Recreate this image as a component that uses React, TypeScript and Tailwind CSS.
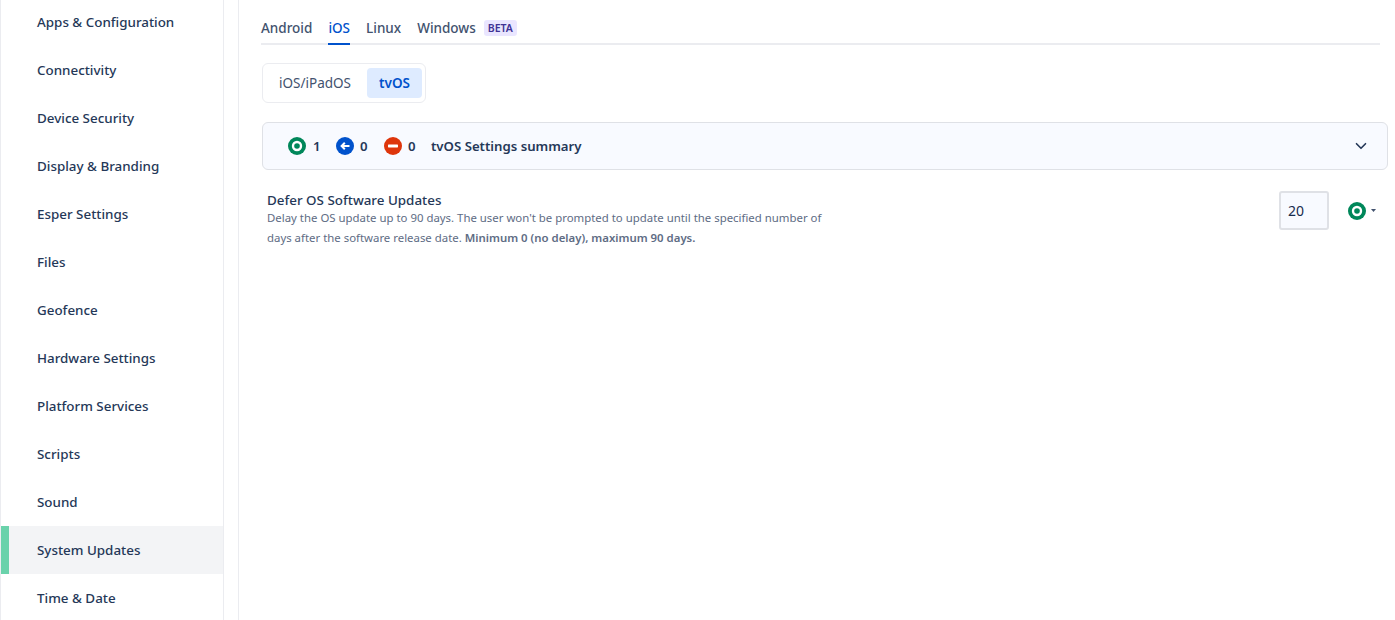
import { ChevronDown } from "lucide-react";

const sections = [
  "Apps & Configuration",
  "Connectivity",
  "Device Security",
  "Display & Branding",
  "Esper Settings",
  "Files",
  "Geofence",
  "Hardware Settings",
  "Platform Services",
  "Scripts",
  "Sound",
  "System Updates",
  "Time & Date",
];

const tabs = ["Android", "iOS", "Linux", "Windows"];

function Enforced({ size = 18 }: { size?: number }) {
  return (
    <svg width={size} height={size} viewBox="0 0 18 18" className="shrink-0">
      <circle cx="9" cy="9" r="9" fill="#00875a" />
      <circle cx="9" cy="9" r="5.2" fill="#fff" />
      <circle cx="9" cy="9" r="2.8" fill="#00875a" />
    </svg>
  );
}

function Inherited() {
  return (
    <svg width="18" height="18" viewBox="0 0 18 18" className="shrink-0">
      <circle cx="9" cy="9" r="9" fill="#0052cc" />
      <path d="M13.5 9H6M8.8 5.8 5.6 9l3.2 3.2" fill="none" stroke="#fff" strokeWidth="2" />
    </svg>
  );
}

function Blocked() {
  return (
    <svg width="18" height="18" viewBox="0 0 18 18" className="shrink-0">
      <circle cx="9" cy="9" r="9" fill="#de350b" />
      <rect x="4" y="7.6" width="10" height="2.8" rx="0.6" fill="#fff" />
    </svg>
  );
}

export default function App() {
  return (
    <div className="flex h-[620px] overflow-hidden bg-white font-['Noto_Sans',sans-serif] text-[#253858]">
      {/* Sidebar */}
      <div className="w-[224px] shrink-0 border-r border-l border-[#ebecf0]">
        <div className="-mt-[2px]">
          {sections.map((name) => (
            <div
              key={name}
              className={`flex h-12 items-center border-l-[8px] pl-[28px] text-[13.4px] font-medium ${
                name === "System Updates"
                  ? "border-[#6ad2ab] bg-[#f3f4f6]"
                  : "border-transparent"
              }`}
            >
              {name}
            </div>
          ))}
        </div>
      </div>

      {/* Main */}
      <div className="ml-[14px] min-w-0 flex-1 border-l border-[#ebecf0] pl-[22px] pr-[7px]">
        <div className="mr-2 flex h-[45px] items-start gap-4 border-b-2 border-[#ebecf0] pt-[19px] text-[13.5px] leading-[18px] text-[#42526e]">
          {tabs.map((tab) => (
            <div key={tab} className="flex items-center">
              <span
                className={
                  tab === "iOS"
                    ? "h-[26px] border-b-2 border-[#0052cc] font-medium text-[#0052cc]"
                    : "font-medium"
                }
              >
                {tab}
              </span>
              {tab === "Windows" && (
                <span className="ml-2 rounded-[3px] bg-[#eae6ff] px-1 text-[10.5px] leading-[16px] font-semibold text-[#403294]">
                  BETA
                </span>
              )}
            </div>
          ))}
        </div>

        <div className="mt-[18px] ml-px flex h-10 w-[164px] items-center rounded-md border border-[#ebecf0] py-[4px] pr-[3px] pl-[4px] text-[13.5px] leading-[28px]">
          <div className="flex h-[30px] flex-1 items-center justify-center pr-[4px] pb-px text-[#42526e]">
            iOS/iPadOS
          </div>
          <div className="flex h-[30px] w-[55px] items-center justify-center rounded bg-[#deebff] pb-px font-semibold text-[#0052cc]">
            tvOS
          </div>
        </div>

        <div className="mt-[19px] ml-px flex h-12 items-center rounded-md border border-[#dfe1e6] bg-[#f8faff] pr-[17px] pl-[25px] text-[13.2px] font-semibold">
          <div className="flex w-[48px] items-center gap-[7px]">
            <Enforced />
            <span className="pt-px">1</span>
          </div>
          <div className="flex w-[48px] items-center gap-[6px]">
            <Inherited />
            <span className="pt-px">0</span>
          </div>
          <div className="flex w-[47px] items-center gap-[6px]">
            <Blocked />
            <span className="pt-px">0</span>
          </div>
          <span className="pt-px">tvOS Settings summary</span>
          <ChevronDown size={18} strokeWidth={2.2} className="ml-auto" />
        </div>

        <div className="mt-[21px] ml-[6px] flex items-start justify-between">
          <div className="w-[570px]">
            <div className="text-[13.4px] leading-[18px] font-medium">
              Defer OS Software Updates
            </div>
            <div className="-mt-px text-[11.4px] leading-[20px] text-[#5e6c84]">
              Delay the OS update up to 90 days. The user won't be prompted to update until the
              specified number of days after the software release date.{" "}
              <span className="font-semibold">Minimum 0 (no delay), maximum 90 days.</span>
            </div>
          </div>
          <div className="flex items-center pr-[12px]">
            <div className="flex h-[39px] w-[50px] items-center rounded-[3px] border-2 border-[#dfe1e6] bg-[#f8faff] pl-[7px] text-[14px] text-[#172b4d]">
              20
            </div>
            <div className="ml-[19px]">
              <Enforced />
            </div>
            <svg width="5" height="3" viewBox="0 0 5 3" className="ml-[5px]">
              <path d="M0 0h5L2.5 3z" fill="#42526e" />
            </svg>
          </div>
        </div>
      </div>
    </div>
  );
}
